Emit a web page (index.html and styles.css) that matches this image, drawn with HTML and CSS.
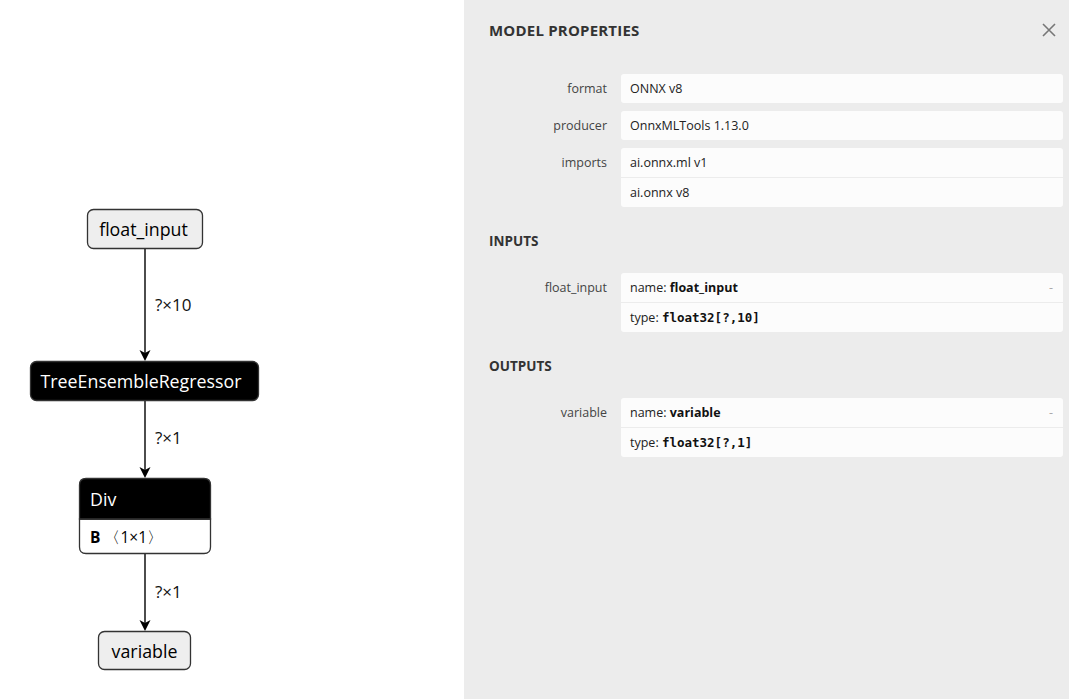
FILE: index.html
```html
<!DOCTYPE html>
<html lang="en">
  <head>
    <meta charset="UTF-8" />
    <meta name="viewport" content="width=device-width, initial-scale=1.0" />
    <title>Model</title>

    <link rel="stylesheet" href="styles.css">
  </head>
  <body>
    <div class="graph">
      <svg width="464" height="699" viewBox="0 0 464 699">
        <!-- edges -->
        <g class="edge">
          <line x1="145" y1="249" x2="145" y2="357" />
          <path d="M145 361 L139.5 350 L145 353 L150.5 350 Z" />
          <text x="155" y="311">?×10</text>
        </g>
        <g class="edge">
          <line x1="145" y1="401" x2="145" y2="474" />
          <path d="M145 478 L139.5 467 L145 470 L150.5 467 Z" />
          <text x="155" y="444">?×1</text>
        </g>
        <g class="edge">
          <line x1="145" y1="553" x2="145" y2="627" />
          <path d="M145 631 L139.5 620 L145 623 L150.5 620 Z" />
          <text x="155" y="598">?×1</text>
        </g>

        <!-- nodes -->
        <g class="node io">
          <rect x="87.5" y="209.5" width="115" height="39" rx="6" />
          <text x="143.5" y="236">float_input</text>
        </g>
        <g class="node op">
          <rect x="30.5" y="361.5" width="228" height="39" rx="6" />
          <text x="141" y="388">TreeEnsembleRegressor</text>
        </g>
        <g class="node op">
          <path class="body" d="M79.5 519 L210.5 519 L210.5 547 Q210.5 553.5 204 553.5 L86 553.5 Q79.5 553.5 79.5 547 Z" />
          <path class="head" d="M79.5 519 L79.5 485 Q79.5 478.5 86 478.5 L204 478.5 Q210.5 478.5 210.5 485 L210.5 519 Z" />
          <line class="sep" x1="79.5" y1="519.5" x2="210.5" y2="519.5" />
          <text x="90" y="506" class="left">Div</text>
          <text x="90" y="543" class="attr"><tspan class="bold">B</tspan> 〈1×1〉</text>
        </g>
        <g class="node io">
          <rect x="98.5" y="631.5" width="92" height="38" rx="6" />
          <text x="144.5" y="658">variable</text>
        </g>
      </svg>
    </div>

    <div class="sidebar">
      <div class="titleBar">
        <span class="title">MODEL PROPERTIES</span>
        <svg class="close" width="14" height="14" viewBox="0 0 14 14">
          <path d="M1 1 L13 13 M13 1 L1 13" />
        </svg>
      </div>

      <div class="props">
        <div class="row">
          <div class="name">format</div>
          <div class="value"><div class="line">ONNX v8</div></div>
        </div>
        <div class="row">
          <div class="name">producer</div>
          <div class="value"><div class="line">OnnxMLTools 1.13.0</div></div>
        </div>
        <div class="row">
          <div class="name">imports</div>
          <div class="value">
            <div class="line">ai.onnx.ml v1</div>
            <div class="line">ai.onnx v8</div>
          </div>
        </div>
      </div>

      <div class="section">INPUTS</div>
      <div class="props">
        <div class="row">
          <div class="name">float_input</div>
          <div class="value">
            <div class="line">name: <b>float_input</b><span class="toggle">-</span></div>
            <div class="line">type: <code>float32[?,10]</code></div>
          </div>
        </div>
      </div>

      <div class="section">OUTPUTS</div>
      <div class="props">
        <div class="row">
          <div class="name">variable</div>
          <div class="value">
            <div class="line">name: <b>variable</b><span class="toggle">-</span></div>
            <div class="line">type: <code>float32[?,1]</code></div>
          </div>
        </div>
      </div>
    </div>
  </body>
</html>
```

FILE: styles.css
```css
body {
  margin: 0;
  display: flex;
  height: 699px;
  overflow: hidden;
  font-family: "Open Sans", "Noto Sans", sans-serif;
  background-color: white;
}
.graph {
  width: 464px;
  flex-shrink: 0;
}
.graph svg {
  display: block;
}
.edge line {
  stroke: black;
  stroke-width: 1.4;
}
.edge path {
  fill: black;
}
.edge text {
  font-family: "Open Sans", sans-serif;
  font-size: 17px;
  fill: #111;
}
.node text {
  font-family: "Open Sans", sans-serif;
  font-size: 17.8px;
  text-anchor: middle;
}
.node text.left {
  text-anchor: start;
}
.io rect {
  fill: #eeeeee;
  stroke: #333;
  stroke-width: 1.3;
}
.io text {
  fill: black;
}
.op rect,
.op .head {
  fill: black;
  stroke: #333;
  stroke-width: 1.3;
}
.op .body {
  fill: white;
  stroke: #333;
  stroke-width: 1.3;
}
.op .sep {
  stroke: #333;
  stroke-width: 1;
}
.op text {
  fill: white;
}
.op text.attr {
  fill: black;
  font-size: 15.5px;
  text-anchor: start;
}
.attr .bold {
  font-weight: bold;
}

.sidebar {
  flex: 1;
  background-color: #ececec;
  padding: 20px 6px 0 25px;
  color: #222;
  font-size: 12.5px;
}
.titleBar {
  display: flex;
  justify-content: space-between;
  align-items: center;
  height: 20px;
}
.title {
  font-size: 15px;
  font-weight: bold;
  color: #333;
  letter-spacing: 0.2px;
}
.close {
  margin-right: 7px;
}
.close path {
  stroke: #777;
  stroke-width: 1.6;
}
.props {
  margin-top: 34px;
}
.section + .props {
  margin-top: 22px;
}
.section {
  margin-top: 24px;
  height: 20px;
  line-height: 20px;
  font-weight: bold;
  font-size: 13.5px;
  color: #333;
}
.row {
  display: flex;
  margin-bottom: 8px;
}
.name {
  width: 118px;
  padding-right: 14px;
  text-align: right;
  line-height: 29px;
  color: #444;
}
.value {
  flex: 1;
  background-color: #fcfcfc;
  border-radius: 3px;
}
.line {
  position: relative;
  height: 29px;
  line-height: 29px;
  padding: 0 9px;
}
.line + .line {
  border-top: 1px solid #ececec;
}
.line b {
  font-weight: bold;
  color: #111;
}
.line code {
  font-family: "DejaVu Sans Mono", "Liberation Mono", monospace;
  font-size: 12.5px;
  font-weight: bold;
  color: #111;
}
.toggle {
  position: absolute;
  right: 10px;
  top: 0;
  color: #aaa;
}
```
